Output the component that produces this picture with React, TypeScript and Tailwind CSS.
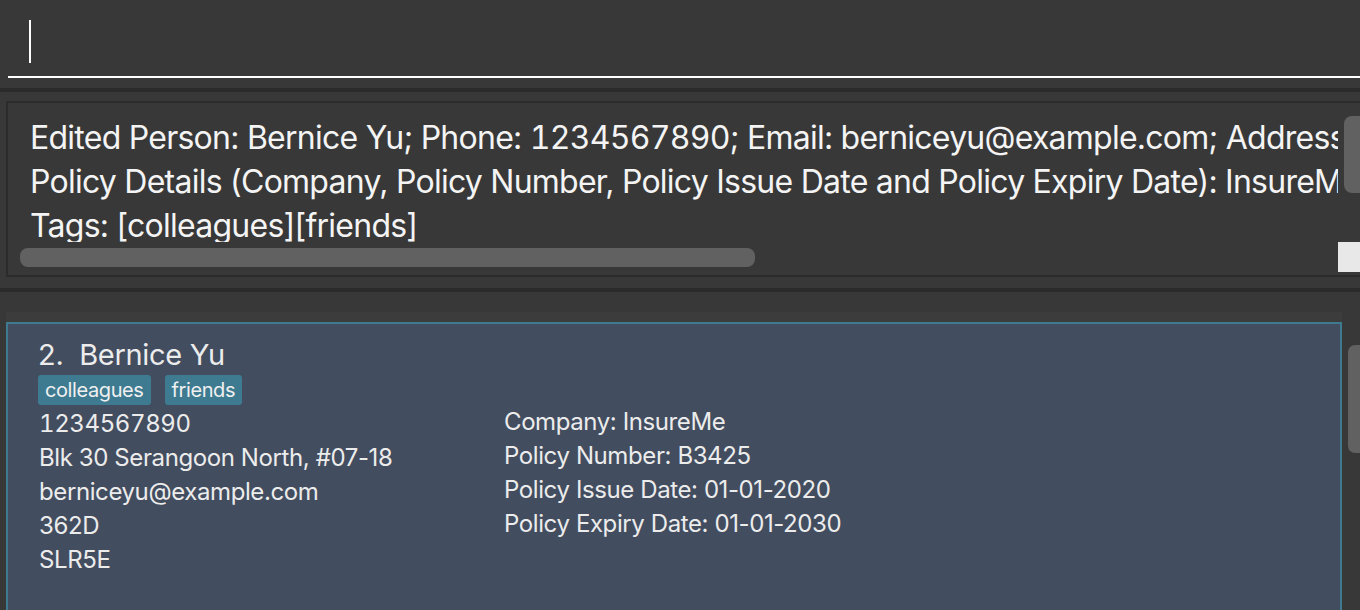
import React from "react";

export default function App() {
  return (
    <div className="w-[1360px] h-[610px] bg-[#383838] overflow-hidden flex flex-col font-['Inter',sans-serif]">
      {/* command box */}
      <div className="h-[88px] shrink-0 pl-[8px] pt-[12px]">
        <div className="h-[66px] border-b-2 border-white pl-[21px] pt-[8px]">
          <div className="w-[2px] h-[43px] bg-white" />
        </div>
      </div>
      <div className="h-[4px] shrink-0 bg-[#2b2b2b]" />
      {/* result box */}
      <div className="h-[196px] shrink-0 pt-[9px] pl-[6px] overflow-hidden">
        <div className="w-[1400px] h-[176px] border-2 border-[#2b2b2b] flex">
          <div className="w-[1330px] flex flex-col">
            <div className="h-[139px] overflow-hidden pl-[22px] pt-[13px] text-[32px] leading-[44px] tracking-[-0.75px] text-[#f4f4f4] whitespace-nowrap">
              <div>Edited Person: Bernice Yu; Phone: <span className="tabular-nums">1234567890</span>; Email: berniceyu@example.com; Address: Blk 30 Serangoon North, #07-18</div>
              <div>Policy Details (Company, Policy Number, Policy Issue Date and Policy Expiry Date): InsureMe, B3425, 01-01-2020, 01-01-2030</div>
              <div>Tags: [colleagues][friends]</div>
            </div>
            <div className="h-[30px] pl-[12px] pt-[6px]">
              <div className="w-[735px] h-[19px] rounded-[8px] bg-[#616161]" />
            </div>
          </div>
          <div className="w-[22px] flex flex-col">
            <div className="h-[139px] pl-[6px] pt-[13px]">
              <div className="w-[20px] h-[77px] rounded-l-[8px] bg-[#616161]" />
            </div>
            <div className="h-[30px] bg-[#e8e8e8]" />
          </div>
        </div>
      </div>
      <div className="h-[4px] shrink-0 bg-[#2b2b2b]" />
      {/* list */}
      <div className="flex-1 flex pt-[20px] pl-[6px]">
        <div className="w-[1338px] bg-[#3c3c3c] pt-[10px]">
          <div className="h-[300px] border-2 border-[#3e7b91] bg-[#424d5f] pl-[31px] pt-[14px] text-[#ececec]">
            <div className="text-[29px] leading-[34px] tracking-[-0.3px] whitespace-nowrap -ml-[1px]">2.&nbsp;&nbsp;Bernice Yu</div>
            <div className="flex gap-[14px] mt-[3px] h-[30px] -ml-[1px]">
              <div className="h-[30px] px-[7px] rounded-[3px] bg-[#3e7b91] text-[20px] leading-[30px] tracking-[-0.4px] text-[#f0f0f0]">colleagues</div>
              <div className="h-[30px] px-[7px] rounded-[3px] bg-[#3e7b91] text-[20px] leading-[30px] tracking-[-0.4px] text-[#f0f0f0]">friends</div>
            </div>
            <div className="flex text-[24px] leading-[34px] tracking-[-0.4px] whitespace-nowrap">
              <div className="w-[465px] pt-[2px]">
                <div className="tabular-nums">1234567890</div>
                <div>Blk 30 Serangoon North, #07-18</div>
                <div>berniceyu@example.com</div>
                <div>362D</div>
                <div>SLR5E</div>
              </div>
              <div>
                <div>Company: InsureMe</div>
                <div>Policy Number: B3425</div>
                <div>Policy Issue Date: 01-01-2020</div>
                <div>Policy Expiry Date: 01-01-2030</div>
              </div>
            </div>
          </div>
        </div>
        <div className="pl-[6px] pt-[33px]">
          <div className="w-[12px] h-[108px] rounded-l-[7px] bg-[#616161]" />
        </div>
      </div>
    </div>
  );
}
